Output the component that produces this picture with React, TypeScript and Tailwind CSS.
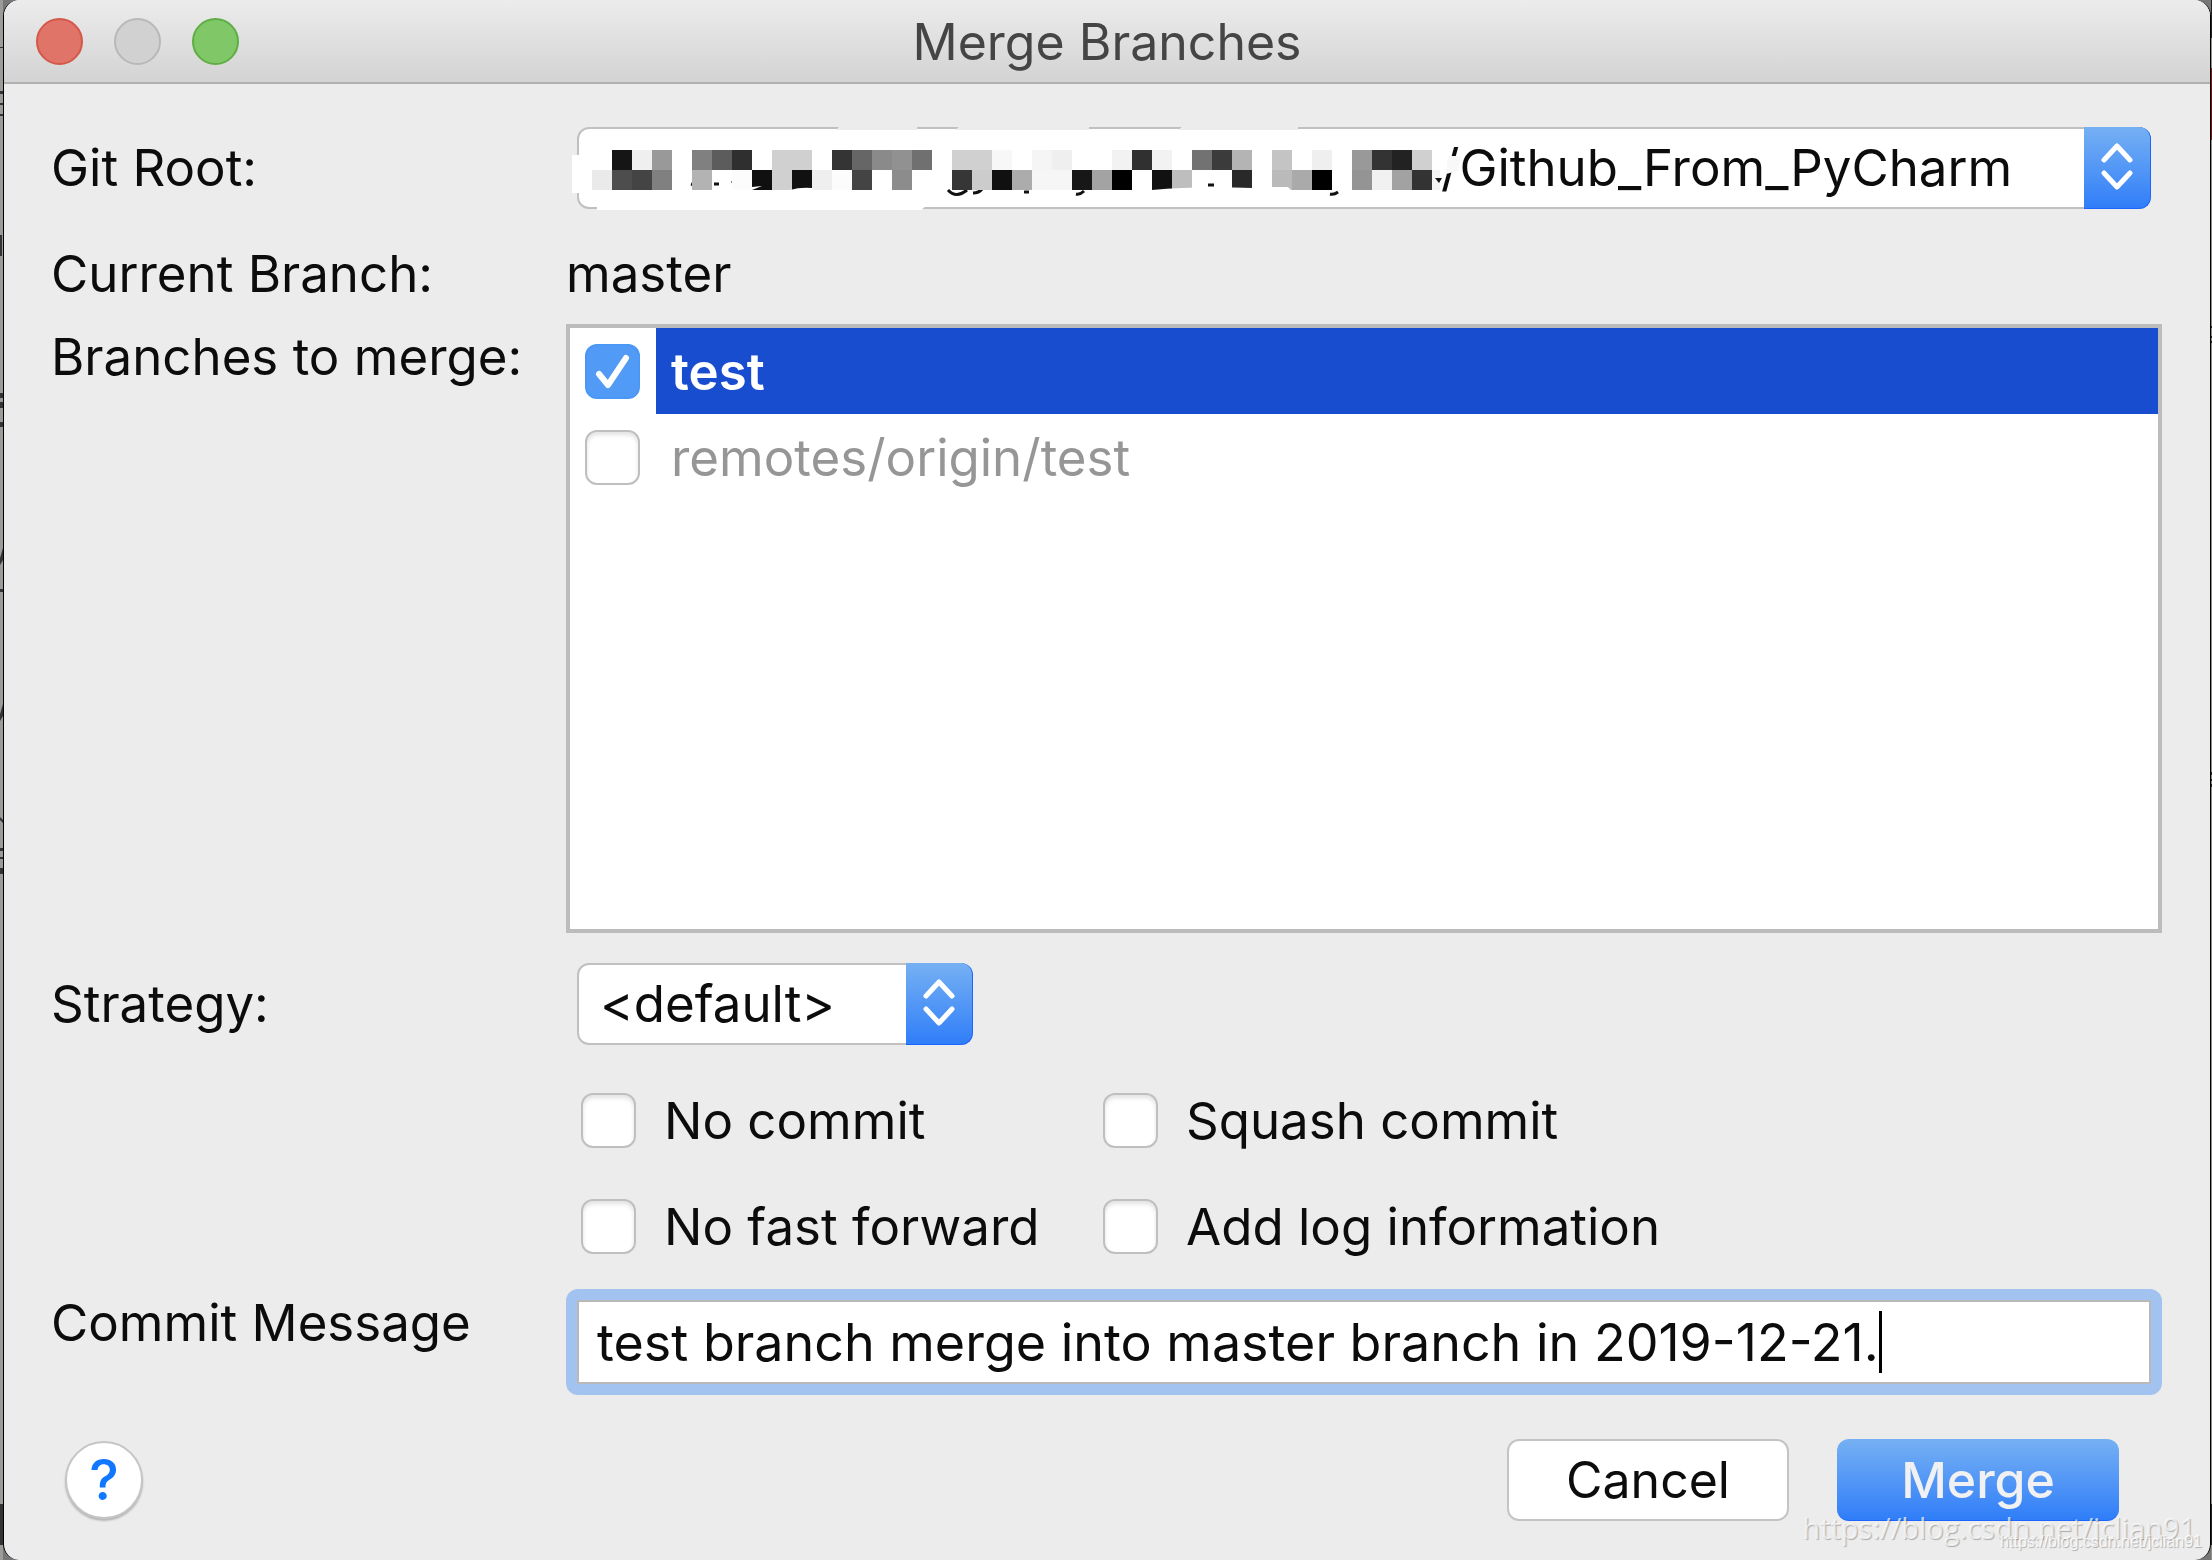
import { useState } from 'react'
import type { ReactNode } from 'react'

const MOSAIC_TOP = [
  '', '#151515', '#efefef', '#999999', '', '#808080', '#5c5c5c', '#2f2f2f', '', '#d0d0d0', '#d0d0d0', '',
  '#343434', '#666666', '#8a8a8a', '#919191', '#707070', '', '#d0d0d0', '#d0d0d0', '#f7f7f7', '', '#f5f5f5',
  '#efefef', '', '', '#f2f2f2', '#303030', '#f2f2f2', '', '#727272', '#3b3b3b', '#b4b4b4', '', '#c4c4c4', '',
  '#efefef', '', '#999999', '#333333', '#222222', '#d0d0d0', '', '',
]

const MOSAIC_BOTTOM = [
  '#eaeaea', '#4d4d4d', '#444444', '#808080', '', '#b3b3b3', '', '#fcfcfc', '#101010', '#d0d0d0', '#111111',
  '#efefef', '#fcfcfc', '#444444', '', '#8c8c8c', '', '', '#363636', '#cccccc', '#101010', '#acacac', '#f6f6f6',
  '#f6f6f6', '#171717', '#a3a3a3', '#000000', '', '#111111', '#bebebe', '', '', '#292929', '', '#bababa',
  '#aaaaaa', '#000000', '', '#949494', '#f1f1f1', '#a2a2a2', '#333333', '', '',
]

// Covers the private part of the path
function RedactedPath() {
  return (
    <svg className="pointer-events-none absolute -left-1.5 -top-0.5" width="900" height="90" viewBox="571 125 900 90" aria-hidden="true">
      <path d="M840 126L868 124H917V130H836zM960 126L975 124H1089V130H955zM1183 126L1198 124H1298V130H1178z" fill="#ececec" />
      <path d="M572 155H592V193H572zM597 206H926L921 210H597z" fill="#fff" />
      <g stroke="#111" strokeWidth="3" fill="none">
        <path d="M691 184Q698 186 706 183M714 184H719M732 181Q738 187 752 186" />
        <path d="M948 190Q956 199 967 190M973 193Q979 193 982 189M1024 192H1029" />
        <path d="M1076 194Q1080 195 1084 191M1208 185H1214M1282 185H1288M1330 194Q1334 195 1338 192" />
      </g>
      {MOSAIC_TOP.map((fill, i) => fill && <rect key={i} x={592 + i * 20} y="150" width="20" height="20" fill={fill} />)}
      {MOSAIC_BOTTOM.map((fill, i) => fill && <rect key={i} x={592 + i * 20} y="170" width="20" height="20" fill={fill} />)}
      <path d="M752 187L762 186L752 190zM790 190Q800 187 812 188V191H790zM1152 190Q1195 186 1252 188V192H1152zM1272 187H1288L1292 191H1272z" fill="#fff" />
      <path d="M1432 170H1440V190H1432z" fill="#f3f3f3" />
      <path d="M1435 178H1442L1439 183z" fill="#111" />
      <path d="M1448 156H1461L1458 171L1446 174z" fill="#f8f8f8" />
    </svg>
  )
}

function Stepper() {
  return (
    <span className="pointer-events-none absolute inset-y-0 right-0 flex w-[67px] items-center justify-center rounded-r-xl border-b border-r border-[#1a66ff] bg-linear-to-b from-[#76b0f3] to-[#2f7df8]">
      <svg width="32" height="50" viewBox="0 0 32 50" fill="none" stroke="#fff" strokeWidth="5" strokeLinecap="round" strokeLinejoin="round" aria-hidden="true">
        <path d="M3 17L16 3L29 17M3 30L16 44L29 30" />
      </svg>
    </span>
  )
}

interface CheckboxProps {
  id: string
  defaultChecked?: boolean
}

function Checkbox({ id, defaultChecked = false }: CheckboxProps) {
  const [checked, setChecked] = useState(defaultChecked)

  return (
    <span className="relative h-[55px] w-[55px] shrink-0">
      <input
        id={id}
        type="checkbox"
        checked={checked}
        onChange={(e) => setChecked(e.target.checked)}
        className="block h-full w-full appearance-none rounded-xl border-2 border-[#bfbfbf] bg-white shadow-[inset_0_3px_4px_#e2e2e2] checked:border-[#4a97f5] checked:bg-[#519af5] checked:shadow-none"
      />
      {checked && (
        <svg className="pointer-events-none absolute inset-0" viewBox="0 0 55 55" fill="none" stroke="#fff" strokeWidth="6" strokeLinecap="round" strokeLinejoin="round" aria-hidden="true">
          <path d="M14 30L23 41L41 14" />
        </svg>
      )}
    </span>
  )
}

function Option({ id, children }: { id: string; children: ReactNode }) {
  return (
    <div className="flex items-center gap-7">
      <Checkbox id={id} />
      <label htmlFor={id} className="pt-0.5">{children}</label>
    </div>
  )
}

// Slivers of the editor behind the dialog
function EditorEdgeLeft() {
  return (
    <svg className="h-full w-[3px]" viewBox="0 0 3 1560" preserveAspectRatio="none" aria-hidden="true">
      <rect width="3" height="1560" fill="#9b9b98" />
      <path d="M0 47H3V48H0zM0 91H3V94H0zM0 103H3V105H0zM0 114H3V116H0zM0 235H2V256H0zM0 393H3V398H0zM0 402H3V408H0zM0 422H3V427H0zM3 548V560L0 565V558zM0 589H3V592H0zM3 704V716L0 721V714zM0 817L3 820V823L0 820zM0 848H3V851H0zM0 857H3V859H0zM0 868H3V874H0zM0 1504H3V1545H0z" fill="#333" />
    </svg>
  )
}

function EditorEdgeRight() {
  return (
    <svg className="h-full w-px" viewBox="0 0 1 1560" preserveAspectRatio="none" aria-hidden="true">
      <rect width="1" height="1560" fill="#8c8f8a" />
      <path d="M0 0H1V38H0zM0 326H1V328H0zM0 336H1V338H0zM0 341H1V343H0zM0 772H1V775H0zM0 779H1V781H0zM0 784H1V787H0zM0 1504H1V1545H0z" fill="#222" />
      <rect y="68" width="1" height="72" fill="#7d1512" />
    </svg>
  )
}

export default function App() {
  const [message, setMessage] = useState('test branch merge into master branch in 2019-12-21.')

  return (
    <div className="relative flex min-h-screen bg-[#777] font-['Inter',sans-serif] text-[51px] leading-[62px] text-[#0c0c0c]">
      <div className="w-[3px] shrink-0 self-stretch">
        <EditorEdgeLeft />
      </div>
      <main className="flex flex-1 flex-col rounded-2xl border-x border-black bg-[#ececec]">
        <header className="grid h-[84px] grid-cols-[1fr_auto_1fr] items-center rounded-t-2xl border-b-2 border-[#b1b1b1] bg-linear-to-b from-[#ececec] to-[#d3d3d3]">
          <div className="flex gap-[31px] pl-8">
            <button aria-label="Close" className="h-[47px] w-[47px] rounded-full border-2 border-[#d45849] bg-[#e07468]" />
            <button aria-label="Minimize" className="h-[47px] w-[47px] rounded-full border-2 border-[#b8b8b8] bg-[#d1d1d1]" />
            <button aria-label="Zoom" className="h-[47px] w-[47px] rounded-full border-2 border-[#5fae45] bg-[#80c768]" />
          </div>
          <h1 className="pt-0.5 text-[50px] text-[#454545]">Merge Branches</h1>
        </header>

        <form className="flex flex-1 flex-col pb-[39px] pl-[47px] pr-12 pt-[43px]" onSubmit={(e) => e.preventDefault()}>
          <div className="grid flex-1 grid-cols-[515px_1fr] grid-rows-[82px_auto_1fr_auto_auto_auto]">
            <label htmlFor="root" className="self-center">Git Root:</label>
            <div className="relative ml-[11px] mr-[11px]">
              <select id="root" className="h-[82px] w-full appearance-none rounded-xl border-2 border-[#c0c0c0] bg-white pl-[862px]">
                <option>/Github_From_PyCharm</option>
              </select>
              <Stepper />
              <RedactedPath />
            </div>

            <span className="mt-[34px]">Current Branch:</span>
            <span className="mt-[34px]">master</span>

            <span className="mt-[21px]">Branches to merge:</span>
            <ul className="mt-[19px] border-4 border-[#bcbcbc] bg-white">
              <li className="flex h-[86px] items-stretch">
                <span className="flex w-[86px] items-center pl-[15px]">
                  <Checkbox id="branch-test" defaultChecked />
                </span>
                <label htmlFor="branch-test" className="flex flex-1 items-center bg-[#184dd0] pl-[15px] pt-0.5 font-semibold text-white">test</label>
              </li>
              <li className="flex h-[86px] items-stretch">
                <span className="flex w-[86px] items-center pl-[15px]">
                  <Checkbox id="branch-remote" />
                </span>
                <label htmlFor="branch-remote" className="flex flex-1 items-center pl-[15px] pt-0.5 text-[#969696]">remotes/origin/test</label>
              </li>
            </ul>

            <label htmlFor="strategy" className="mt-[30px] self-center">Strategy:</label>
            <div className="relative ml-[11px] mt-[30px] w-[396px]">
              <select id="strategy" className="h-[82px] w-full appearance-none rounded-xl border-2 border-[#c0c0c0] bg-white pl-[21px]">
                <option>&lt;default&gt;</option>
              </select>
              <Stepper />
            </div>

            <div className="col-start-2 ml-[15px] mt-[43px] grid grid-cols-[522px_1fr] gap-y-[42px]">
              <Option id="no-commit">No commit</Option>
              <Option id="squash">Squash commit</Option>
              <Option id="no-ff">No fast forward</Option>
              <Option id="log">Add log information</Option>
            </div>

            <label htmlFor="message" className="mt-[34px]">Commit Message</label>
            <div className="mt-[31px] flex h-[106px] rounded-xl border-[11px] border-[#a2c3f0] bg-[#a2c3f0]">
              <div className="flex flex-1 items-center border-2 border-[#b9b9b9] bg-white pl-[18px]">
                <input
                  id="message"
                  value={message}
                  onChange={(e) => setMessage(e.target.value)}
                  className="field-sizing-content h-full text-[52px] outline-none"
                />
                <span className="h-[62px] w-[3px] bg-black" />
              </div>
            </div>
          </div>

          <footer className="mt-11 flex items-center pl-3.5 pr-[43px] text-[50px]">
            <button aria-label="Help" className="h-[78px] w-[78px] rounded-full border-2 border-[#c6c6c6] bg-white text-[56px] font-medium text-[#0f78ff] shadow-[0_2px_2px_#b5b5b5]">?</button>
            <button className="ml-auto h-[82px] w-[282px] rounded-xl border-2 border-[#c4c4c4] bg-white">Cancel</button>
            <button className="ml-12 h-[82px] w-[282px] rounded-xl border-b border-[#1a66ff] bg-linear-to-b from-[#76b0f3] to-[#2f7df8] font-medium text-[#f1f1f3]">Merge</button>
          </footer>
        </form>
      </main>
      <div className="w-px shrink-0 self-stretch">
        <EditorEdgeRight />
      </div>

      <span className="absolute bottom-3 right-4 font-['Open_Sans',sans-serif] text-[29px] leading-[40px] text-white/70 [text-shadow:1px_1px_1px_#0004]">https://blog.csdn.net/jclian91</span>
      <span className="absolute bottom-2 right-2.5 font-['Liberation_Sans',sans-serif] text-[16px] leading-[20px] text-white/80 [text-shadow:1px_1px_1px_#0004]">https://blog.csdn.net/jclian91</span>
    </div>
  )
}
